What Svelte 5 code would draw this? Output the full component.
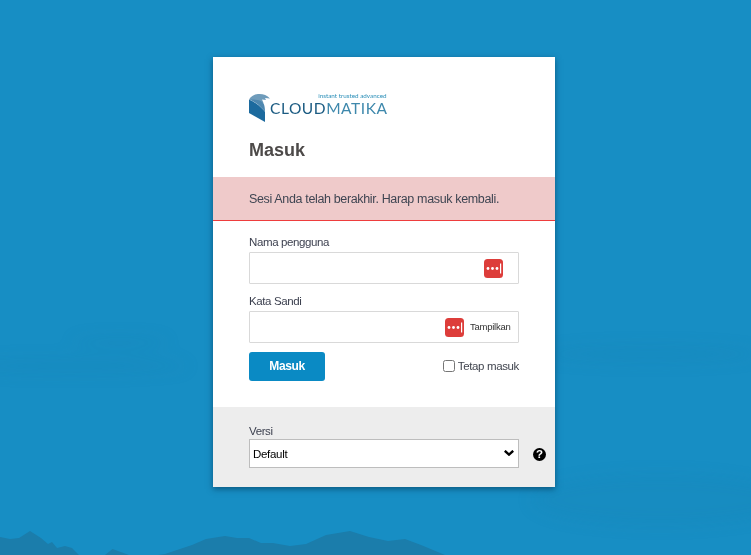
<script>
  let user = $state('');
  let pass = $state('');
  let keep = $state(false);
  let version = $state('Default');
</script>

<svg class="scenery" viewBox="0 0 751 555" preserveAspectRatio="none" aria-hidden="true">
  <defs>
    <filter id="soft" x="-20%" y="-100%" width="140%" height="300%"><feGaussianBlur stdDeviation="8"/></filter>
  </defs>
  <g filter="url(#soft)" fill="#1b7fad" opacity=".14">
    <ellipse cx="70" cy="366" rx="120" ry="8"/>
    <ellipse cx="120" cy="342" rx="50" ry="6"/>
    <ellipse cx="650" cy="354" rx="110" ry="9"/>
    <ellipse cx="660" cy="500" rx="130" ry="26"/>
  </g>
  <path fill="#1b7dab" d="M0 537l10 2 9-1 11-7 11 7 7 6 4-2 5 6 8-2 7 2 7 7H0zM105 555l7.500-6 16.500 6zM158 555l7-1 27-9 14-6 19-3 12 2h12l12 5 12 0 17 3 16-2 20-9 24-4 19 6 19 4 17-2 16 6 24 10z"/>
</svg>

<main class="card">
  <div class="top">
    <div class="logo">
      <svg class="mark" viewBox="0 0 21 29" aria-hidden="true">
        <path fill="#1c6a9e" d="M0 6.500c5 2 9 5 12 8l4 4v10.500L0 20z"/>
        <path fill="#4f88b0" d="M8 4.500c3 1.500 6 4 7 7 .7 2 1 4 1 7l-4-4C9 11 5 8.500 0 6.500z"/>
        <path fill="#6f9cbb" d="M0 6.500C2 3 5 1.500 9 1c4-.4 9 .6 12 4.500l-5-.5 1 2-4-.5 1.500 3.500C12 7 6 6 0 6.500z"/>
      </svg>
      <div class="wordmark">
        <span class="tagline">instant trusted advanced</span>
        <span class="name"><b>CLOUD</b>MATIKA</span>
      </div>
    </div>
    <h1>Masuk</h1>
  </div>

  <div class="alert">Sesi Anda telah berakhir. Harap masuk kembali.</div>

  <form class="form" onsubmit={(e) => e.preventDefault()}>
    <label class="field">
      <span>Nama pengguna</span>
      <span class="input">
        <input type="text" bind:value={user} />
        <svg class="key" viewBox="0 0 19 19" aria-hidden="true">
          <rect width="19" height="19" rx="3.500" fill="#dd3d3a"/>
          <circle cx="4" cy="9.500" r="1.400" fill="#fff"/><circle cx="8.500" cy="9.500" r="1.400" fill="#fff"/><circle cx="13" cy="9.500" r="1.400" fill="#fff"/>
          <rect x="16" y="4.500" width="1.200" height="10" fill="#fff"/>
        </svg>
      </span>
    </label>
    <label class="field second">
      <span>Kata Sandi</span>
      <span class="input">
        <input type="password" bind:value={pass} />
        <svg class="key" viewBox="0 0 19 19" aria-hidden="true">
          <rect width="19" height="19" rx="3.500" fill="#dd3d3a"/>
          <circle cx="4" cy="9.500" r="1.400" fill="#fff"/><circle cx="8.500" cy="9.500" r="1.400" fill="#fff"/><circle cx="13" cy="9.500" r="1.400" fill="#fff"/>
          <rect x="16" y="4.500" width="1.200" height="10" fill="#fff"/>
        </svg>
        <button type="button" class="show">Tampilkan</button>
      </span>
    </label>
    <div class="actions">
      <button type="submit" class="submit">Masuk</button>
      <label class="keep"><input type="checkbox" bind:checked={keep} />Tetap masuk</label>
    </div>
  </form>

  <div class="footer">
    <label for="ver">Versi</label>
    <div class="version">
      <select id="ver" bind:value={version}>
        <option>Default</option>
      </select>
      <svg class="chev" viewBox="0 0 10 6" aria-hidden="true"><path d="M.8.8L5 4.600 9.200.8" fill="none" stroke="#000" stroke-width="2.400"/></svg>
      <span class="help">?</span>
    </div>
  </div>
</main>

<style>
  :global(html), :global(body) {
    margin: 0;
    height: 100%;
    overflow: hidden;
    background: #178ec4;
  }
  .scenery {
    position: fixed;
    inset: 0;
    width: 100%;
    height: 100%;
  }
  .card {
    position: relative;
    box-sizing: border-box;
    width: 342px;
    height: 430px;
    margin: 57px auto 0 213px;
    background: #fff;
    box-shadow: 0 2px 6px rgba(0, 40, 70, 0.55);
    font-family: "Liberation Sans", Arial, sans-serif;
    color: #3f4552;
    display: flex;
    flex-direction: column;
  }
  .top {
    height: 120px;
    box-sizing: border-box;
    padding: 36px 36px 0;
  }
  .logo {
    display: flex;
    align-items: flex-start;
    height: 31px;
  }
  .mark {
    width: 21px;
    height: 29px;
    flex: none;
  }
  .wordmark {
    display: flex;
    flex-direction: column;
    align-items: flex-end;
    margin-top: -1px;
  }
  .tagline {
    font-family: Lato, sans-serif;
    font-size: 6.3px;
    line-height: 7px;
    color: #2b8fb8;
    padding-right: 1px;
  }
  .name {
    font-family: Lato, sans-serif;
    font-size: 15.5px;
    line-height: 18px;
    letter-spacing: 0.55px;
    color: #3e88ac;
  }
  .name b {
    font-weight: 400;
    color: #1b5b82;
  }
  h1 {
    margin: 15px 0 0;
    font-size: 18px;
    line-height: 22px;
    font-weight: 700;
    color: #4d4a49;
  }
  .alert {
    box-sizing: border-box;
    height: 44px;
    padding: 0 36px;
    display: flex;
    align-items: center;
    background: #efcaca;
    border-bottom: 1px solid #ee3d3d;
    font-size: 12.5px;
    letter-spacing: -0.35px;
  }
  .form {
    height: 186px;
    box-sizing: border-box;
    padding: 13px 36px 0;
  }
  .field {
    display: block;
    font-size: 11.5px;
    letter-spacing: -0.38px;
    line-height: 16px;
    color: #3b3f4e;
  }
  .field.second {
    margin-top: 9px;
  }
  .input {
    box-sizing: border-box;
    display: flex;
    align-items: center;
    width: 270px;
    height: 32px;
    margin-top: 2px;
    border: 1px solid #d9d9d9;
    border-radius: 1px;
    padding-right: 6px;
  }
  .input input {
    flex: 1;
    min-width: 0;
    border: 0;
    outline: 0;
    background: none;
  }
  .key {
    width: 19px;
    height: 19px;
    flex: none;
    margin-right: 9px;
  }
  .input:has(.show) .key {
    margin-right: 6px;
  }
  .show {
    border: 0;
    background: none;
    padding: 0 2px 2px 0;
    font: 9.5px "Liberation Sans", Arial, sans-serif;
    letter-spacing: -0.25px;
    color: #333;
    width: 42px;
    white-space: nowrap;
  }
  .actions {
    display: flex;
    align-items: center;
    justify-content: space-between;
    width: 270px;
    margin-top: 9px;
  }
  .submit {
    width: 76px;
    height: 29px;
    border: 0;
    border-radius: 3px;
    background: #0a8ac4;
    color: #fff;
    font: 700 12px "Liberation Sans", Arial, sans-serif;
    letter-spacing: -0.4px;
    padding: 0 0 2px;
  }
  .keep {
    display: flex;
    align-items: center;
    font-size: 11.5px;
    letter-spacing: -0.36px;
    color: #41454f;
    padding-bottom: 1px;
  }
  .keep input {
    width: 12px;
    height: 12px;
    margin: 0 3px 0 0;
  }
  .footer {
    flex: 1;
    background: #ededed;
    box-sizing: border-box;
    padding: 16px 36px 0;
  }
  .footer label {
    display: block;
    font-size: 11.5px;
    letter-spacing: -0.4px;
    line-height: 16px;
    color: #3b3f4e;
  }
  .version {
    position: relative;
    width: 270px;
  }
  select {
    display: block;
    box-sizing: border-box;
    width: 270px;
    height: 29px;
    border: 1px solid #bdbdbd;
    border-radius: 0;
    background-color: #fff;
    color: #000;
    font: 11.5px "Liberation Sans", Arial, sans-serif;
    letter-spacing: -0.3px;
    padding: 0 0 0 3px;
    appearance: none;
  }
  .chev {
    position: absolute;
    left: 255px;
    top: 11px;
    width: 10px;
    height: 6px;
    pointer-events: none;
  }
  .help {
    position: absolute;
    left: 284px;
    top: 9px;
    width: 13px;
    height: 13px;
    border-radius: 50%;
    background: #000;
    color: #fff;
    font: 700 11.5px/13px "Liberation Sans", Arial, sans-serif;
    text-align: center;
  }
</style>
